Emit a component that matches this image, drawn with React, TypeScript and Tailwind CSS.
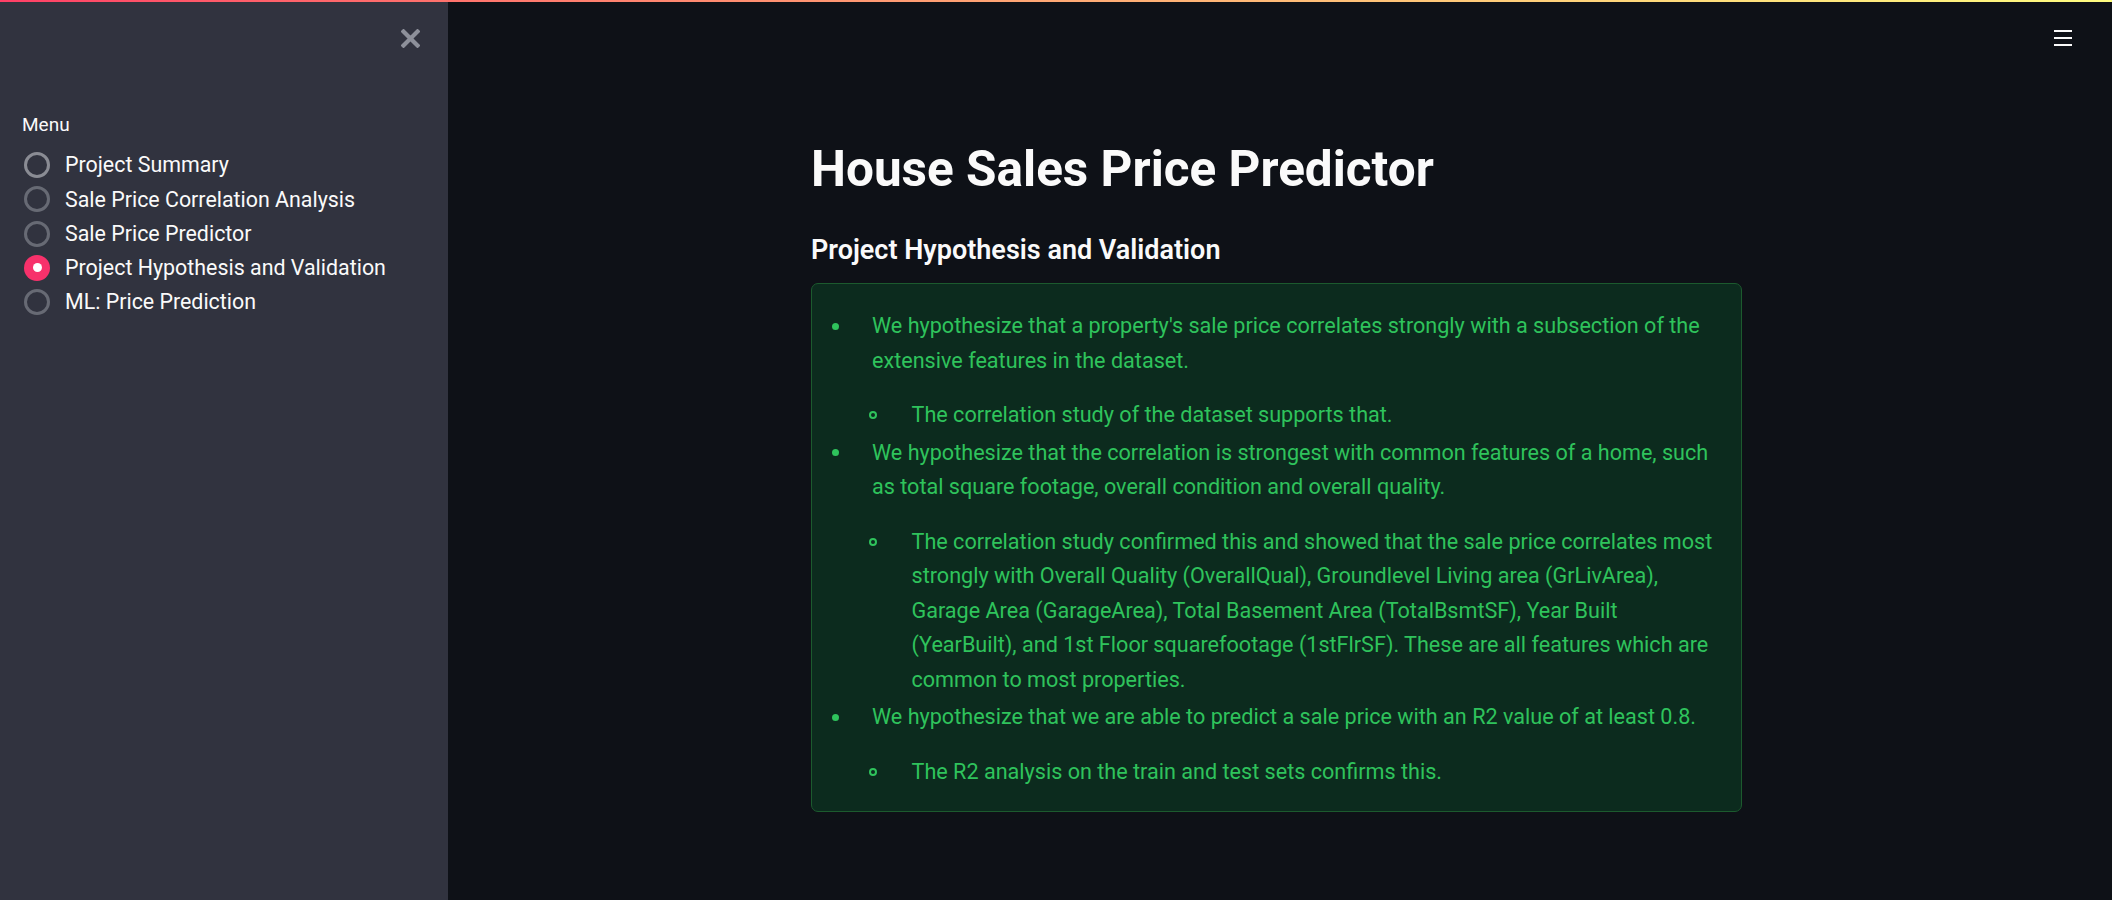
const pages = [
  "Project Summary",
  "Sale Price Correlation Analysis",
  "Sale Price Predictor",
  "Project Hypothesis and Validation",
  "ML: Price Prediction",
];
const selected = 3;

type Item = { text: string; sub: string };

const items: Item[] = [
  {
    text: "We hypothesize that a property's sale price correlates strongly with a subsection of the extensive features in the dataset.",
    sub: "The correlation study of the dataset supports that.",
  },
  {
    text: "We hypothesize that the correlation is strongest with common features of a home, such as total square footage, overall condition and overall quality.",
    sub: "The correlation study confirmed this and showed that the sale price correlates most strongly with Overall Quality (OverallQual), Groundlevel Living area (GrLivArea), Garage Area (GarageArea), Total Basement Area (TotalBsmtSF), Year Built (YearBuilt), and 1st Floor squarefootage (1stFlrSF). These are all features which are common to most properties.",
  },
  {
    text: "We hypothesize that we are able to predict a sale price with an R2 value of at least 0.8.",
    sub: "The R2 analysis on the train and test sets confirms this.",
  },
];

function Radio({ label, active }: { label: string; active: boolean }) {
  return (
    <div className="flex items-center h-[34.25px]">
      {active ? (
        <span className="ml-[24px] w-[26px] h-[26px] rounded-full bg-[#f7316b] flex items-center justify-center">
          <span className="w-[9px] h-[9px] rounded-full bg-white" />
        </span>
      ) : (
        <span
          className={
            "ml-[24px] w-[26px] h-[26px] rounded-full border-[3px] " +
            (label === "Project Summary" ? "border-[#8a8c94]" : "border-[#676a74]")
          }
        />
      )}
      <span className="ml-[15px] text-[21.4px] text-[#fafafa] leading-none">{label}</span>
    </div>
  );
}

function Sidebar() {
  return (
    <aside className="w-[448px] shrink-0 bg-[#31333f] h-full">
      <div className="flex justify-end pr-[28px] pt-[27px]">
        <svg width="19" height="19" viewBox="0 0 19 19">
          <path d="M2.5 2.5 L16.5 16.5 M16.5 2.5 L2.5 16.5" stroke="#8d909a" strokeWidth="4.2" strokeLinecap="square" />
        </svg>
      </div>
      <div className="pl-[22px] mt-[67px] text-[19px] text-[#fafafa] leading-none">Menu</div>
      <div className="mt-[14px] flex flex-col">
        {pages.map((p, i) => (
          <Radio key={p} label={p} active={i === selected} />
        ))}
      </div>
    </aside>
  );
}

export default function App() {
  return (
    <div className="font-[Roboto,sans-serif] h-[900px] w-full flex flex-col bg-[#0e1117] overflow-hidden">
      <div className="h-[2px] w-full bg-gradient-to-r from-[#ff3f66] to-[#fffd80] shrink-0" />
      <div className="flex flex-1">
        <Sidebar />
        <main className="flex-1">
          <div className="flex justify-end pr-[40px] pt-[27px]">
            <svg width="18" height="18" viewBox="0 0 18 18">
              <rect x="0" y="1" width="18" height="2" fill="#fafafa" />
              <rect x="0" y="8" width="18" height="2" fill="#fafafa" />
              <rect x="0" y="15" width="18" height="2" fill="#fafafa" />
            </svg>
          </div>
          <div className="w-[931px] ml-[363px] mt-[94px]">
            <h1 className="text-[49.5px] leading-[56px] font-bold text-[#fafafa]">House Sales Price Predictor</h1>
            <h3 className="mt-[36px] text-[27px] leading-[34px] font-semibold text-[#fafafa]">
              Project Hypothesis and Validation
            </h3>
            <div className="mt-[16px] rounded-[7px] border border-[#1c5a2e] bg-[#0c2b1e] pt-[25px] pb-[22px] pr-[21px] text-[21.6px] leading-[34.5px] text-[#2fc35c]">
              {items.map((it, i) => (
                <div key={i} className={i > 0 ? "mt-[3px]" : ""}>
                  <div className="flex">
                    <div className="w-[60px] shrink-0 h-[34.5px] flex items-center">
                      <span className="ml-[20px] w-[7px] h-[7px] rounded-full bg-[#2fc35c]" />
                    </div>
                    <div className="flex-1">
                      <p>{it.text}</p>
                      <div className="mt-[20px] flex ml-[-4px]">
                        <div className="w-[43.5px] shrink-0 h-[34.5px] flex items-center">
                          <span className="ml-[1px] w-[8px] h-[8px] rounded-full border-2 border-[#2fc35c]" />
                        </div>
                        <p className="flex-1">{it.sub}</p>
                      </div>
                    </div>
                  </div>
                </div>
              ))}
            </div>
          </div>
        </main>
      </div>
    </div>
  );
}
